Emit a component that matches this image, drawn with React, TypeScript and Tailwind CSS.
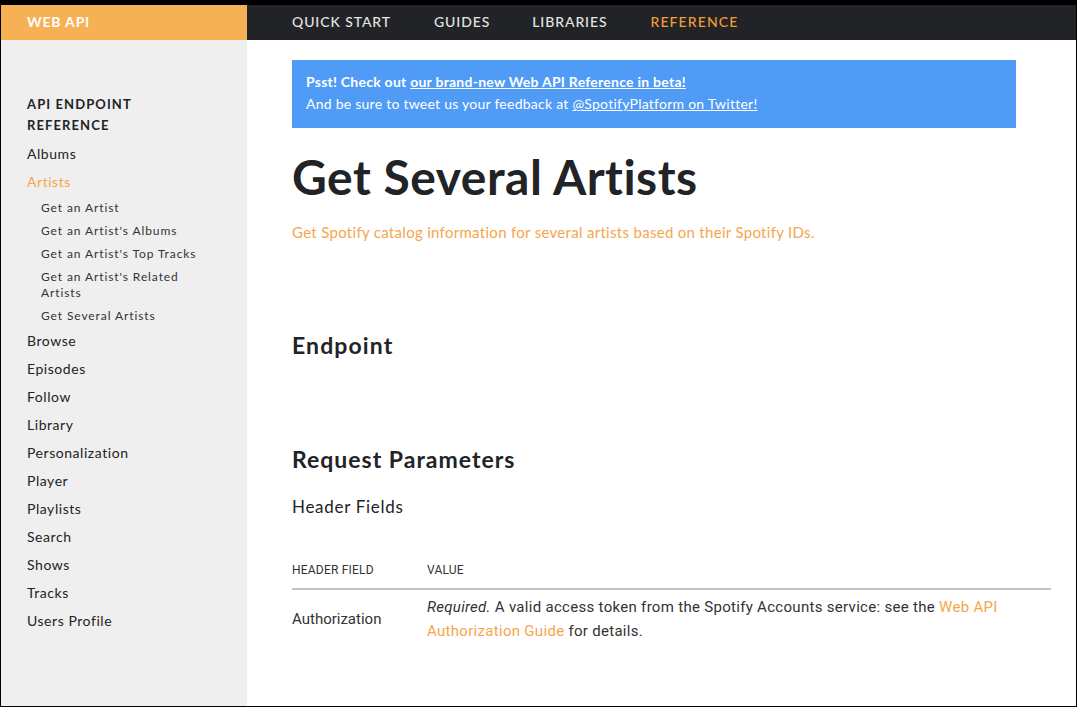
import React from "react";

const navLinks = [
  { label: "QUICK START", ml: "ml-0" },
  { label: "GUIDES", ml: "ml-[43px]" },
  { label: "LIBRARIES", ml: "ml-[42px]" },
];

const topItems = ["Albums"];
const artistSubs = [
  "Get an Artist",
  "Get an Artist's Albums",
  "Get an Artist's Top Tracks",
  "Get an Artist's Related Artists",
  "Get Several Artists",
];
const restItems = [
  "Browse",
  "Episodes",
  "Follow",
  "Library",
  "Personalization",
  "Player",
  "Playlists",
  "Search",
  "Shows",
  "Tracks",
  "Users Profile",
];

function Sidebar() {
  return (
    <aside className="w-[246px] shrink-0 bg-[#efefef] pt-[54px] pl-[26px] text-[#222326]">
      <h3 className="text-[13px] leading-[21px] font-bold tracking-[1.1px] uppercase">
        API Endpoint
        <br />
        Reference
      </h3>
      <ul className="mt-[4px]">
        {topItems.map((item) => (
          <li key={item} className="text-[14px] leading-[28px] tracking-[0.55px]">
            {item}
          </li>
        ))}
        <li className="text-[14px] leading-[28px] tracking-[0.55px] text-[#f6a54c]">Artists</li>
        <ul className="pl-[14px] w-[180px]">
          {artistSubs.map((s) => (
            <li key={s} className="text-[12px] leading-4 py-[3.5px] tracking-[0.9px] text-[#333]">
              {s}
            </li>
          ))}
        </ul>
        {restItems.map((item) => (
          <li key={item} className="text-[14px] leading-[28px] tracking-[0.55px]">
            {item}
          </li>
        ))}
      </ul>
    </aside>
  );
}

export default function App() {
  return (
    <div
      className="w-[1077px] h-[707px] border-t-[5px] border-x border-b border-black flex flex-col overflow-hidden bg-white"
      style={{ fontFamily: "Lato, 'Open Sans', sans-serif" }}
    >
      <header className="h-[35px] shrink-0 flex bg-[#222326]">
        <div className="w-[246px] bg-[#f7b155] flex items-center pl-[26px] pb-[3px]">
          <span className="text-white text-[14px] font-bold tracking-[0.8px]">WEB API</span>
        </div>
        <nav className="flex items-center pl-[45px] pb-[3px]">
          {navLinks.map((l) => (
            <span key={l.label} className={`${l.ml} text-[14px] text-[#e4e4e4] tracking-[0.9px] font-medium`}>
              {l.label}
            </span>
          ))}
          <span className="ml-[43px] text-[14px] text-[#f29c34] tracking-[1.1px] font-medium">REFERENCE</span>
        </nav>
      </header>

      <div className="flex flex-1 min-h-0">
        <Sidebar />
        <main className="flex-1 pl-[45px] pr-[24px] pt-[20px] text-[#222326]">
          <div className="w-[724px] bg-[#509bf5] text-white px-[14px] pt-[11px] pb-[13px] text-[14px] leading-[22px] tracking-[0.25px]">
            <p className="font-bold">
              Psst! Check out <span className="underline">our brand-new Web API Reference in beta!</span>
            </p>
            <p>
              And be sure to tweet us your feedback at{" "}
              <span className="underline">@SpotifyPlatform on Twitter!</span>
            </p>
          </div>

          <h1 className="mt-[21px] text-[48px] leading-[56px] font-bold tracking-[0.5px]">Get Several Artists</h1>
          <p className="mt-[15px] text-[15px] leading-[24px] text-[#f6a54c] tracking-[0.3px]">
            Get Spotify catalog information for several artists based on their Spotify IDs.
          </p>

          <h2 className="mt-[86px] text-[23px] leading-[30px] font-bold tracking-[1.1px]">Endpoint</h2>
          <h2 className="mt-[84px] text-[23px] leading-[30px] font-bold tracking-[1px]">Request Parameters</h2>
          <h3 className="mt-[21px] text-[17px] leading-[24px] tracking-[0.7px]">Header Fields</h3>

          <table className="mt-[41px] w-[759px] text-left" style={{ fontFamily: "Roboto, sans-serif" }}>
            <thead>
              <tr className="border-b-2 border-[#c2c1c6]">
                <th className="w-[135px] text-[12px] leading-[20px] font-normal pb-[8px] text-[#333] uppercase tracking-[0.2px]">
                  Header Field
                </th>
                <th className="text-[12px] leading-[20px] font-normal pb-[8px] text-[#333] uppercase tracking-[0.2px]">
                  Value
                </th>
              </tr>
            </thead>
            <tbody>
              <tr>
                <td className="text-[15px] leading-[24px] pt-[5px] align-middle text-[#333]">Authorization</td>
                <td className="text-[15px] leading-[24px] pt-[5px] pr-[40px] text-[#333] tracking-[0.3px]">
                  <em>Required.</em> A valid access token from the Spotify Accounts service: see the{" "}
                  <span className="text-[#f6a54c]">Web API Authorization Guide</span> for details.
                </td>
              </tr>
            </tbody>
          </table>
        </main>
      </div>
    </div>
  );
}
